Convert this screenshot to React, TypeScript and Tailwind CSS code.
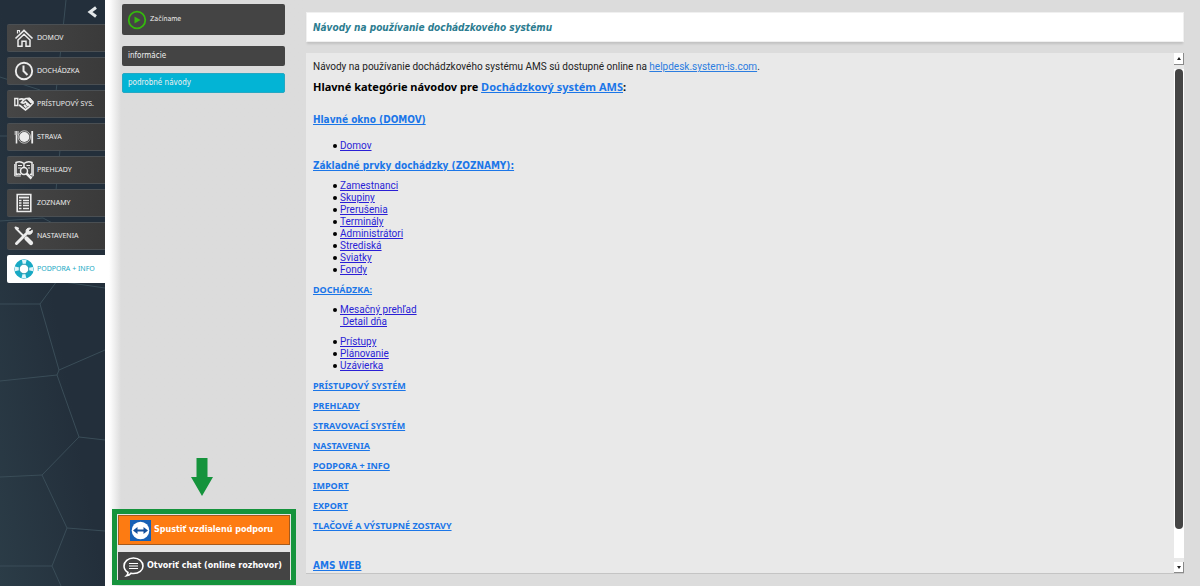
import React, { useState } from 'react';

const HomeIcon = () => (
    <svg viewBox="0 0 20 20" className="w-5 h-5 shrink-0" fill="none" stroke="currentColor" strokeWidth="1.7">
        <path d="M1.5 10.5 10 2.5l8.5 8" />
        <path d="M3.5 5.5v-3h2v2" strokeWidth="1.2" />
        <path d="M4 12v6.2h4v-5h4v5h4V12L10 6.3z" strokeWidth="1.5" />
    </svg>
);

const ClockIcon = () => (
    <svg viewBox="0 0 20 20" className="w-5 h-5 shrink-0" fill="none" stroke="currentColor" strokeWidth="1.9">
        <circle cx="10" cy="10" r="8.2" />
        <path d="M9.5 4.5v5.5l4 4" strokeWidth="2" />
    </svg>
);

const HandshakeIcon = () => (
    <svg viewBox="0 0 20 20" className="w-5 h-5 shrink-0" fill="none" stroke="currentColor">
        <path d="M.8 4.5h3v7h-3z" strokeWidth="1.4" />
        <path d="M5 5.5c2-.8 3.500-.8 5 0l2-1h3l4 4.500-3 3.500-4.500 3.500-5-4L5 11" strokeWidth="1.7" />
        <path d="M10 5.500 7.500 8.500c1.500 1 3 .5 4-.8l4.500 4M10 11l2.500 2.500M12 9.500l2.500 2.500" strokeWidth="1.8" />
        <path d="M13 4.500 17 9l2.500-1-3.500-4z" fill="currentColor" />
    </svg>
);

const PlateIcon = () => (
    <svg viewBox="0 0 20 20" className="w-5 h-5 shrink-0" fill="none" stroke="currentColor">
        <circle cx="10.300" cy="10" r="5" fill="currentColor" stroke="none" />
        <circle cx="10.300" cy="10" r="6.200" strokeWidth="1" strokeOpacity=".7" />
        <path d="M2.500 8v8.500" strokeWidth="1.600" />
        <path d="M1.200 4v4M2.600 4v4M4 4v4" strokeWidth=".9" />
        <path d="M18.200 4v12.500" strokeWidth="1.800" />
    </svg>
);

const BookSearchIcon = () => (
    <svg viewBox="0 0 20 20" className="w-5 h-5 shrink-0" fill="none" stroke="currentColor" strokeWidth="1.5">
        <path d="M10 3.500C7.500 1.500 4 1.500 2 2.500v12c2-.6 3.500-.6 5 0M10 3.500c2.500-2 6-2 8-1v12l-2-.3M10 3.500V7" />
        <path d="M.7 4v12h6M19.300 4v12h-2" strokeWidth="1" />
        <path d="M4 5.500h4M4 8h3M12.500 5.500h3.500M14 8h2" strokeWidth="1" />
        <circle cx="10" cy="11" r="3.500" />
        <path d="m12.500 13.500 5 5" strokeWidth="2.500" />
    </svg>
);

const ListIcon = () => (
    <svg viewBox="0 0 20 20" className="w-5 h-5 shrink-0" fill="none" stroke="currentColor">
        <path d="M3.200 1.500h13.600v17H3.200z" strokeWidth="1.600" />
        <path d="M5 4.500h10" strokeWidth="1.800" />
        <path d="M5 7.500h2.500M5 10h2.500M5 12.500h2.500M5 15.500h2.500M9 7.500h6M9 10h6M9 12.500h6M9 15.500h6" strokeWidth="1.500" />
    </svg>
);

const ToolsIcon = () => (
    <svg viewBox="0 0 20 20" className="w-5 h-5 shrink-0" fill="none" stroke="currentColor" strokeLinecap="round">
        <path d="m2.500 17.500 11-11" strokeWidth="3" />
        <path d="M16.500 2.200a3.200 3.200 0 1 0 1.800 2l-2.300 1.600-1.700-1.500z" fill="currentColor" strokeWidth="1" />
        <path d="m2 2.500 7 7" strokeWidth="1.800" />
        <path d="M1.500 1.500 4 2.500" strokeWidth="2" />
        <path d="m12.500 12.500 4.500 4.500" strokeWidth="4.200" />
    </svg>
);

const LifebuoyIcon = () => (
    <svg viewBox="0 0 20 20" className="w-5 h-5 shrink-0" fill="none">
        <circle cx="10" cy="10" r="7.200" stroke="#18a9c4" strokeWidth="5" />
        <circle cx="10" cy="10" r="7.200" stroke="#dff5fa" strokeWidth="4" strokeDasharray="3.800 7.510" strokeDashoffset="1.900" />
        <circle cx="10" cy="10" r="4.700" stroke="#0d7f97" strokeWidth=".6" />
    </svg>
);

const menu = [
    { label: 'DOMOV', Icon: HomeIcon },
    { label: 'DOCHÁDZKA', Icon: ClockIcon },
    { label: 'PRÍSTUPOVÝ SYS.', Icon: HandshakeIcon },
    { label: 'STRAVA', Icon: PlateIcon },
    { label: 'PREHĽADY', Icon: BookSearchIcon },
    { label: 'ZOZNAMY', Icon: ListIcon },
    { label: 'NASTAVENIA', Icon: ToolsIcon },
    { label: 'PODPORA + INFO', Icon: LifebuoyIcon },
];

const lists = ['Zamestnanci', 'Skupiny', 'Prerušenia', 'Terminály', 'Administrátori', 'Strediská', 'Sviatky', 'Fondy'];

const sections = [
    'PRÍSTUPOVÝ SYSTÉM',
    'PREHĽADY',
    'STRAVOVACÍ SYSTÉM',
    'NASTAVENIA',
    'PODPORA + INFO',
    'IMPORT',
    'EXPORT',
    'TLAČOVÉ A VÝSTUPNÉ ZOSTAVY',
];

const GuideItem = ({ children }: { children: React.ReactNode }) => (
    <li className="flex items-center gap-[3px]">
        <span className="w-1 h-1 rounded-full bg-black" />
        <a href="#" className="text-[#2a1fd6] underline">{children}</a>
    </li>
);

const App = () => {
    const [active, setActive] = useState('PODPORA + INFO');

    return (
        <div className="min-h-screen flex bg-[#dcdcdc] font-['DejaVu_Sans_Condensed','DejaVu_Sans',sans-serif]">
            {/* Main menu */}
            <nav className="relative w-[105px] shrink-0 bg-linear-to-tr from-[#2b3c47] via-[#232f3b] to-[#232f3b] font-['Noto_Sans',sans-serif]">
                <svg viewBox="0 0 105 586" className="absolute top-0 left-0 w-full" fill="none" stroke="#3a4d58" strokeWidth="1">
                    <path d="M66 0 60 57 53 118M0 77l40 13M0 136h20M60 150l-4 40M0 221l43-3 15 8M57 281l48 7M57 281 40 304H0M40 304l19 66 46-20M59 370l-2 5-57 6M57 375l22 62 26 3M79 437l-37 38-42 2M42 475l25 53 38 3M67 528l-15 38H0M52 566l9 20" />
                </svg>
                <div className="relative flex flex-col">
                    <button aria-label="Skryť menu" className="h-6 flex items-center justify-end pr-2 text-white">
                        <svg viewBox="0 0 10 12" className="w-[10px] h-3" fill="none" stroke="#e4e8ea" strokeWidth="3">
                            <path d="M9 1.500 3 6l6 4.500" />
                        </svg>
                    </button>
                    <ul className="flex flex-col gap-[5px] pl-[7px]">
                        {menu.map(({ label, Icon }) => (
                            <li key={label}>
                                <button
                                    onClick={() => setActive(label)}
                                    className={
                                        active === label
                                            ? 'w-full h-7 flex items-center gap-[3px] pl-[7px] text-[7px] whitespace-nowrap rounded-l-xs bg-white text-[#18a9c4]'
                                            : 'w-full h-7 flex items-center gap-[3px] pl-[7px] text-[7px] whitespace-nowrap rounded-l-xs border-y border-[#4a4f53] bg-linear-to-r from-[#464646] to-[#3a3a3a] text-[#ececec]'
                                    }
                                >
                                    <Icon />
                                    {label}
                                </button>
                            </li>
                        ))}
                    </ul>
                </div>
            </nav>

            {/* Submenu */}
            <aside className="w-[201px] shrink-0 flex flex-col justify-between bg-linear-to-r from-white from-2% to-[#dcdcdc] to-8%">
                <div className="flex flex-col pt-1 pl-[17px] pr-[21px] text-[8px] text-[#f0f0f0]">
                    <button className="h-[31px] flex items-center gap-[3px] pl-[5px] rounded-xs bg-[#444]">
                        <svg viewBox="0 0 20 20" className="w-5 h-5" fill="none">
                            <circle cx="10" cy="10" r="8.300" stroke="#35b80e" strokeWidth="1.800" />
                            <path d="m7.500 6.500 6 3.500-6 3.500z" fill="#35b80e" />
                        </svg>
                        <span className="text-[7px]">Začíname</span>
                    </button>
                    <button className="h-5 mt-[11px] pl-1.5 text-left rounded-xs bg-[#444]">informácie</button>
                    <button className="h-5 mt-[7px] pl-[5px] text-left rounded-xs border border-[#25a8c3] bg-[#03b4d5]">podrobné návody</button>
                </div>

                <div className="flex flex-col items-center pl-[7px] pr-[10px] pb-px">
                    <svg viewBox="0 0 22 38" className="w-[22px] h-[38px] mb-[13px] mr-1" fill="#15933c">
                        <path d="M5.500 0h11v19H22L11 38 0 19h5.500z" />
                    </svg>
                    <div className="w-full flex flex-col gap-[7px] border-[5px] border-[#15933c] bg-[#e4e4e4] px-px pt-px font-['DejaVu_Sans',sans-serif] text-[8px] font-bold text-white">
                        <button className="h-[30px] flex items-center gap-[3px] pl-[11px] border border-[#a55a1c] bg-[#fd7b12] whitespace-nowrap">
                            <svg viewBox="0 0 21 21" className="w-[21px] h-[21px] shrink-0">
                                <path d="M0 0h21v21H0z" fill="#1760b5" />
                                <circle cx="10.500" cy="10.500" r="8.800" fill="#fff" />
                                <path d="m3 10.500 4.500-3.500v2.500h6V7l4.500 3.500-4.500 3.500v-2.500h-6V14z" fill="#134f9c" />
                            </svg>
                            Spustiť vzdialenú podporu
                        </button>
                        <button className="h-7 flex items-center gap-[3px] pl-[5px] bg-[#444] whitespace-nowrap">
                            <svg viewBox="0 0 21 21" className="w-[21px] h-[21px] shrink-0" fill="none" stroke="#fff" strokeWidth="1.600">
                                <path d="M5 16.500C2.500 15 1 12.700 1 10c0-4.500 4-8 9.500-8S20 5.500 20 10s-4 7.500-9.500 7.500c-1 0-1.500 0-2.500-.3-1 1.300-2.500 2.300-4.500 2.600 1-1 1.500-2 1.500-3.300z" />
                                <path d="M6 7.500h9M6 10h9M6 12.500h9" strokeWidth="1.200" />
                            </svg>
                            Otvoriť chat (online rozhovor)
                        </button>
                    </div>
                </div>
            </aside>

            {/* Content */}
            <main className="flex-1 min-w-0 flex flex-col pt-3 pb-3 pr-4 font-['Roboto',sans-serif]">
                <h1 className="h-[30px] flex items-center px-1.5 border border-[#f0f0f0] bg-white shadow-[0_3px_2px_-1px_#c2c2c2] font-['DejaVu_Sans_Condensed','DejaVu_Sans',sans-serif] text-[10px] font-bold italic text-[#2c7c90]">
                    Návody na používanie dochádzkového systému
                </h1>

                <div className="flex-1 mt-[11px] flex border-b border-[#c4c4c4] bg-[#e9e9e9]">
                    <div className="flex-1 pt-2 px-[7px] text-[10px] leading-3 text-[#222]">
                        <p>
                            Návody na používanie dochádzkového systému AMS sú dostupné online na{' '}
                            <a href="#" className="text-[#2b7de0] underline">helpdesk.system-is.com</a>.
                        </p>
                        <h2 className="mt-1.5 font-['Noto_Sans',sans-serif] text-[11px] leading-4 font-bold text-black">
                            Hlavné kategórie návodov pre <a href="#" className="text-[#1b76e8] underline">Dochádzkový systém AMS</a>:
                        </h2>
                        <h3 className="mt-[17px] font-['DejaVu_Sans_Condensed','DejaVu_Sans',sans-serif] text-[10px] leading-4 font-bold">
                            <a href="#" className="text-[#1b76e8] underline">Hlavné okno (DOMOV)</a>
                        </h3>
                        <ul className="mt-3 pl-5">
                            <GuideItem>Domov</GuideItem>
                        </ul>
                        <h3 className="mt-2 font-['DejaVu_Sans_Condensed','DejaVu_Sans',sans-serif] text-[10px] font-bold">
                            <a href="#" className="text-[#1b76e8] underline">Základné prvky dochádzky (ZOZNAMY):</a>
                        </h3>
                        <ul className="mt-2 pl-5">
                            {lists.map((item) => (
                                <GuideItem key={item}>{item}</GuideItem>
                            ))}
                        </ul>
                        <h4 className="mt-2 font-['Noto_Sans',sans-serif] text-[9px] leading-3 font-bold">
                            <a href="#" className="text-[#1b76e8] underline">DOCHÁDZKA:</a>
                        </h4>
                        <ul className="mt-2 pl-5">
                            <GuideItem>Mesačný prehľad</GuideItem>
                            <li className="pl-[7px]">
                                <a href="#" className="text-[#2a1fd6] underline">&nbsp;Detail dňa</a>
                            </li>
                        </ul>
                        <ul className="mt-2 pl-5">
                            <GuideItem>Prístupy</GuideItem>
                            <GuideItem>Plánovanie</GuideItem>
                            <GuideItem>Uzávierka</GuideItem>
                        </ul>
                        {sections.map((section) => (
                            <h4 key={section} className="mt-2 font-['Noto_Sans',sans-serif] text-[9px] leading-3 font-bold">
                                <a href="#" className="text-[#1b76e8] underline">{section}</a>
                            </h4>
                        ))}
                        <h3 className="mt-7 font-['DejaVu_Sans_Condensed','DejaVu_Sans',sans-serif] text-[10px] font-bold">
                            <a href="#" className="text-[#1b76e8] underline">AMS WEB</a>
                        </h3>
                    </div>

                    {/* Scrollbar */}
                    <div className="w-[10px] flex flex-col">
                        <button aria-label="Hore" className="h-3 flex items-center justify-center border-r border-b border-[#8a8a8a] bg-white">
                            <svg viewBox="0 0 4 3" className="w-1 h-[3px]"><path d="M0 3h4L2 0z" fill="#222" /></svg>
                        </button>
                        <div className="flex-1 my-1 px-px bg-white">
                            <div className="h-[94%] rounded-full bg-[#444]" />
                        </div>
                        <button aria-label="Dole" className="h-[11px] flex items-center justify-center border-r border-b border-[#8a8a8a] bg-white">
                            <svg viewBox="0 0 4 3" className="w-1 h-[3px]"><path d="M0 0h4L2 3z" fill="#222" /></svg>
                        </button>
                    </div>
                </div>
            </main>
        </div>
    );
};

export default App;
